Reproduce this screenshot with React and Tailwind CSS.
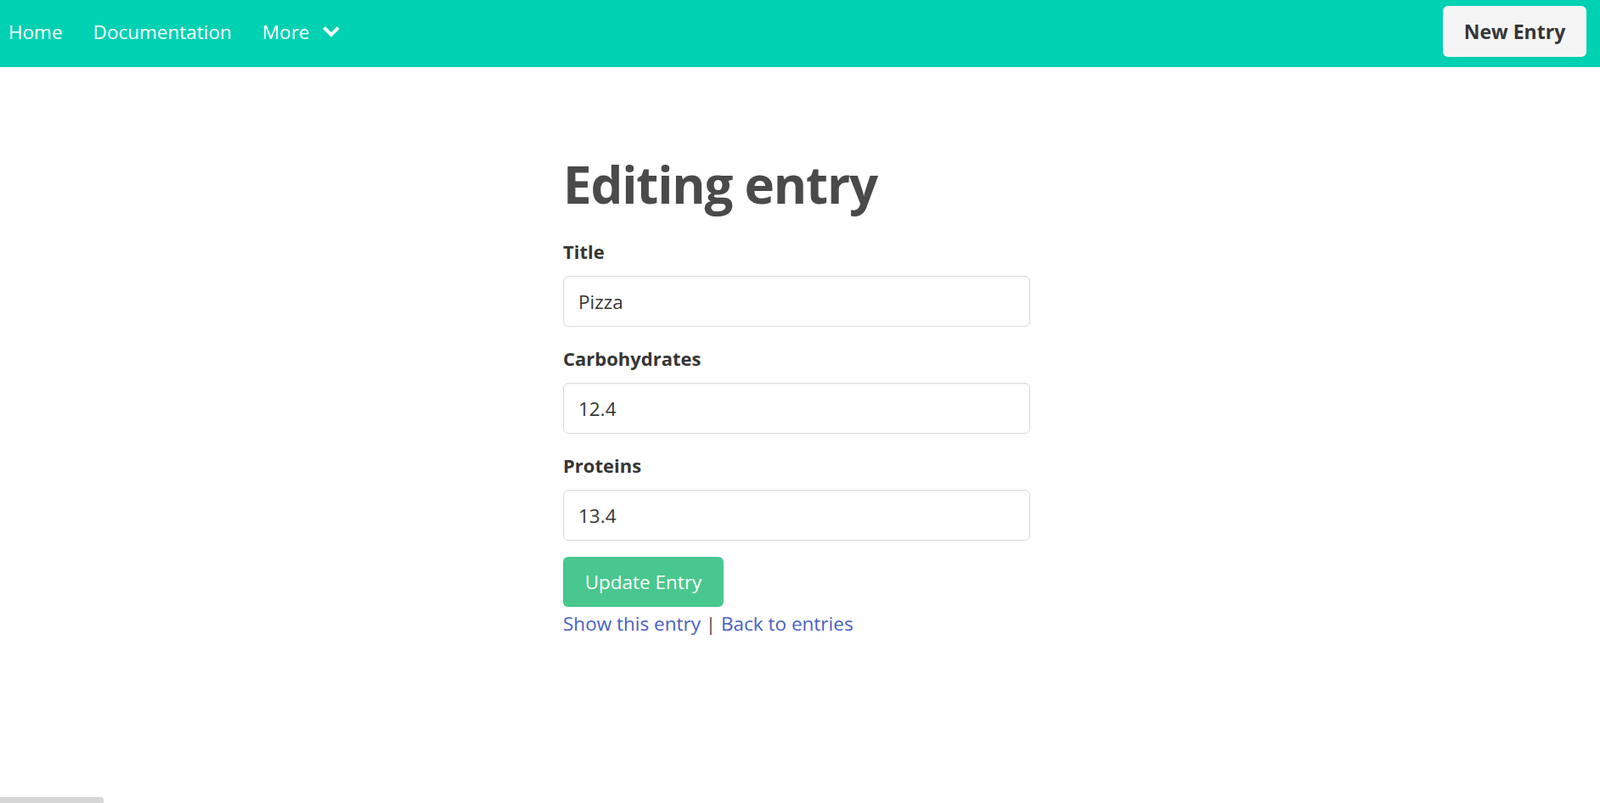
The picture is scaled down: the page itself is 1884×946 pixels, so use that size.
import React from "react";

const font = { fontFamily: '"Open Sans", "Noto Sans", sans-serif' };

function Field({ label, value }) {
  return (
    <div className="mb-[19px]">
      <label className="block text-[22px] font-bold text-[#363636] leading-[36px] mb-[11px]">
        {label}
      </label>
      <input
        readOnly
        value={value}
        className="block w-full h-[60px] rounded-[6px] border border-[#dbdbdb] bg-white px-[17px] text-[22.5px] text-[#363636] shadow-[inset_0_1px_3px_rgba(10,10,10,0.05)] outline-none"
        style={font}
      />
    </div>
  );
}

export default function App() {
  return (
    <div className="min-h-screen bg-white relative" style={font}>
      <nav className="h-[79px] bg-[#00d1b2] flex items-start justify-between">
        <div className="flex items-center h-full pb-[3px] text-white text-[22.5px]">
          <a className="pl-[10px] pr-[18px] h-full flex items-center">Home</a>
          <a className="px-[18px] h-full flex items-center">Documentation</a>
          <a className="px-[18px] h-full flex items-center gap-[16px]">
            More
            <svg width="20" height="14" viewBox="0 0 20 14" fill="none">
              <polyline
                points="3,3 10,10 17,3"
                stroke="white"
                strokeWidth="4"
                strokeLinecap="square"
                strokeLinejoin="miter"
              />
            </svg>
          </a>
        </div>
        <div className="pr-[16px] pt-[7px]">
          <button className="h-[60px] w-[169px] rounded-[6px] bg-[#f5f5f5] text-[#363636] text-[23px] font-bold">
            New Entry
          </button>
        </div>
      </nav>

      <main className="mx-auto w-[550px] pt-[98px] -translate-x-[4px]">
        <h1 className="text-[60px] font-bold text-[#4a4a4a] leading-[80px] tracking-[-1.2px] mb-[21px]">
          Editing entry
        </h1>
        <Field label="Title" value="Pizza" />
        <Field label="Carbohydrates" value="12.4" />
        <Field label="Proteins" value="13.4" />
        <button className="h-[59px] w-[189px] rounded-[6px] bg-[#48c78e] text-white text-[22.5px]">
          Update Entry
        </button>
        <div className="mt-[2px] text-[22.5px] leading-[36px] text-[#4a4a4a]">
          <a className="text-[#485fc7]">Show this entry</a> |{" "}
          <a className="text-[#485fc7]">Back to entries</a>
        </div>
      </main>

      <div className="fixed left-0 bottom-0 w-[122px] h-[7px] bg-[#d6d6d6] rounded-tr-[4px]" />
    </div>
  );
}
